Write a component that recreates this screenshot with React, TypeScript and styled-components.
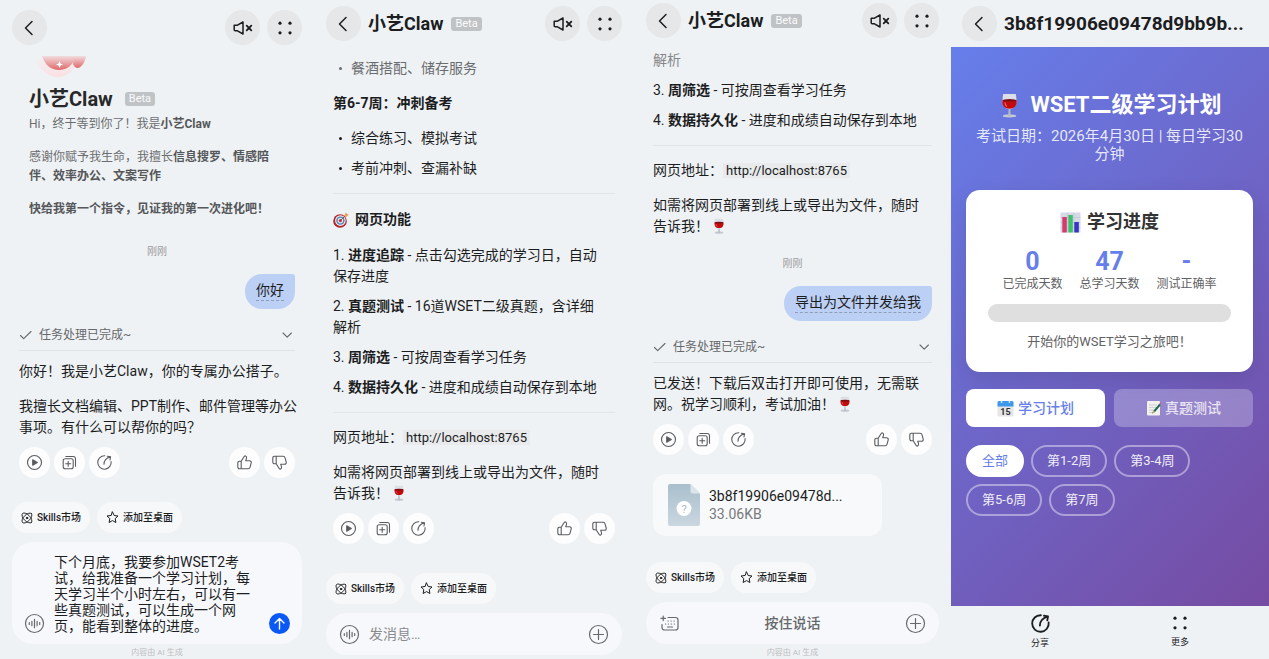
import React from "react";
import styled, { createGlobalStyle, css } from "styled-components";

const GlobalStyle = createGlobalStyle`
  * { box-sizing: border-box; }
  body {
    margin: 0;
    background: #eff2f4;
    color: #1c1d1f;
    font-family: Roboto, "Noto Sans CJK SC", sans-serif;
    font-size: 14px;
    line-height: 21px;
  }
  button, input, textarea { font: inherit; color: inherit; }
  button { border: 0; padding: 0; background: none; cursor: pointer; }
  p, h1, h2, h3, ul, ol { margin: 0; padding: 0; font-weight: 400; }
  ul, ol { list-style: none; }
  svg { display: block; flex: none; }
`;

/* ---------- page ---------- */

const Board = styled.main`
  display: grid;
  grid-template-columns: 314fr 320fr 317fr 318fr;
  min-height: 100vh;
`;

const Phone = styled.section<{ $top?: number }>`
  display: flex;
  flex-direction: column;
  min-width: 0;
  padding-top: ${(p) => p.$top ?? 0}px;
`;

const TopBar = styled.header`
  display: flex;
  align-items: center;
  gap: 7px;
  padding: 0 12px;
`;

const RoundButton = styled.button`
  display: grid;
  place-items: center;
  flex: none;
  width: 35px;
  height: 35px;
  border-radius: 50%;
  background: #e5e7e9;
`;

const BarTitle = styled.h1`
  display: flex;
  align-items: center;
  flex: 1;
  gap: 8px;
  min-width: 0;
  font-size: 18px;
  font-weight: 700;
  line-height: 24px;
`;

const Beta = styled.span`
  padding: 0 4px;
  border-radius: 3px;
  background: #c0c3c5;
  color: #fafbfc;
  font-size: 11px;
  font-weight: 400;
  line-height: 14px;
`;

const Thread = styled.div<{ $gap: number }>`
  display: flex;
  flex-direction: column;
  padding: ${(p) => p.$gap}px 19px 16px;
`;

/* ---------- messages ---------- */

const Intro = styled.div`
  display: flex;
  flex-direction: column;
  gap: 14px;
  padding-left: 10px;
  color: #6b6d70;
  font-size: 12px;
  line-height: 19px;
  white-space: nowrap;
  b { color: #55575a; }
`;

const IntroTitle = styled.h1`
  display: flex;
  align-items: center;
  gap: 12px;
  margin: -4px 0 -10px;
  color: #26282a;
  font-size: 20px;
  font-weight: 700;
  line-height: 24px;
`;

const Time = styled.time<{ $gap: number }>`
  margin-top: ${(p) => p.$gap}px;
  color: #9b9da0;
  font-size: 10px;
  line-height: 14px;
  text-align: center;
`;

const Bubble = styled.p`
  align-self: flex-end;
  margin-top: 15px;
  padding: 7px 11px 8px;
  border-radius: 17px 3px 17px 17px;
  background: #bcd0f6;
  line-height: 19px;
  span {
    display: block;
    border-bottom: 1px dashed #8d9dbb;
  }
`;

const Task = styled.button`
  display: flex;
  align-items: center;
  gap: 7px;
  margin: 16px 0 10px;
  padding-bottom: 5px;
  border-bottom: 1px solid #e1e4e6;
  color: #66686b;
  font-size: 12px;
  line-height: 20px;
  text-align: left;
  span { flex: 1; }
`;

const Text = styled.p<{ $gap?: number }>`
  margin-top: ${(p) => p.$gap ?? 0}px;
  white-space: nowrap;
`;

const Rule = styled.hr`
  width: 100%;
  height: 1px;
  margin: 14px 0;
  border: 0;
  background: #e3e6e8;
`;

const SubHead = styled.h2`
  display: flex;
  align-items: center;
  gap: 6px;
  margin: 14px 0;
  font-size: 14px;
  font-weight: 700;
  ${Rule} + & { margin: 1px 0 15px; }
`;

const Bullets = styled.ul<{ $faded?: boolean }>`
  display: grid;
  gap: 9px;
  color: ${(p) => (p.$faded ? "#6a6c6f" : "inherit")};
  li {
    display: flex;
    align-items: center;
    gap: 9px;
    padding-left: 6px;
  }
  li::before {
    content: "";
    width: 3px;
    height: 3px;
    border-radius: 50%;
    background: currentColor;
  }
`;

const Steps = styled.ol`
  display: grid;
  gap: 9px;
  white-space: nowrap;
`;

const Faded = styled.span`
  color: #85878a;
`;

const Address = styled.code`
  padding: 0 3px;
  background: #e8eaec;
  font-family: inherit;
  font-size: 13px;
`;

const Inline = styled.span`
  display: inline-block;
  margin-left: 2px;
  vertical-align: -3px;
`;

const Actions = styled.div`
  display: flex;
  gap: 4px;
  margin-top: 9px;
  button {
    display: grid;
    place-items: center;
    width: 31px;
    height: 31px;
    border-radius: 50%;
    background: #fdfdfe;
    color: #5a5c5f;
  }
  button:nth-child(4) { margin-left: auto; }
`;

const FileCard = styled.button`
  display: flex;
  align-items: center;
  gap: 9px;
  align-self: flex-start;
  width: 229px;
  height: 62px;
  margin-top: 19px;
  padding: 0 15px;
  border-radius: 13px;
  background: #f8f9fb;
  text-align: left;
  line-height: 18px;
`;

const FileText = styled.span`
  display: grid;
  small {
    color: #77797c;
    font-size: 14px;
  }
`;

/* ---------- composer ---------- */

const Dock = styled.footer<{ $end?: number }>`
  display: flex;
  flex-direction: column;
  margin-top: auto;
  padding: 0 12px ${(p) => p.$end ?? 0}px;
`;

const Chips = styled.div`
  display: flex;
  gap: 7px;
  margin-bottom: 9px;
`;

const Chip = styled.button`
  display: flex;
  align-items: center;
  gap: 4px;
  height: 31px;
  padding: 0 9px;
  border-radius: 16px;
  background: #f7f8fa;
  font-size: 10px;
  font-weight: 500;
`;

const Composer = styled.div<{ $tall?: boolean }>`
  display: flex;
  align-items: center;
  gap: 9px;
  min-height: 42px;
  padding: 0 13px;
  border-radius: 21px;
  background: #f7f8fb;
  color: #66686b;
  ${(p) =>
    p.$tall &&
    css`
      align-items: flex-end;
      padding: 12px 12px 10px;
    `}
`;

const Draft = styled.textarea`
  width: 198px;
  height: 80px;
  margin-right: auto;
  padding: 0;
  border: 0;
  outline: 0;
  resize: none;
  overflow: hidden;
  background: none;
  color: #1c1d1f;
  line-height: 16px;
`;

const Field = styled.input`
  flex: 1;
  min-width: 0;
  padding: 0;
  border: 0;
  outline: 0;
  background: none;
  &::placeholder { color: #8a8c90; opacity: 1; }
`;

const Send = styled.button`
  display: grid;
  place-items: center;
  width: 21px;
  height: 21px;
  border-radius: 50%;
  background: #0a59f7;
  color: #fff;
`;

const TalkButton = styled.button`
  flex: 1;
  font-weight: 500;
`;

const Note = styled.small`
  height: 15px;
  padding-top: 3px;
  color: #bcbec1;
  font-size: 8px;
  line-height: 12px;
  text-align: center;
`;

/* ---------- study plan page ---------- */

const FileBar = styled(TopBar)`
  height: 47px;
  padding: 0 11px;
`;

const FileTitle = styled.h1`
  overflow: hidden;
  font-size: 19px;
  font-weight: 700;
  line-height: 24px;
  white-space: nowrap;
`;

const Plan = styled.div`
  flex: 1;
  padding: 45px 16px 15px 15px;
  background: linear-gradient(135deg, #667eea 0%, #764ba2 100%);
  color: #fff;
`;

const PlanTitle = styled.h2`
  display: flex;
  justify-content: center;
  align-items: center;
  gap: 8px;
  font-size: 22px;
  font-weight: 700;
  line-height: 26px;
`;

const PlanSub = styled.p`
  margin-top: 9px;
  color: rgba(255, 255, 255, 0.85);
  font-size: 15px;
  line-height: 18px;
  text-align: center;
`;

const Card = styled.section`
  margin-top: 27px;
  padding: 20px 22px;
  border-radius: 14px;
  background: #fff;
  box-shadow: 0 8px 22px rgba(0, 0, 0, 0.1);
  color: #5f6164;
  text-align: center;
  h3 {
    display: flex;
    justify-content: center;
    align-items: center;
    gap: 6px;
    color: #333;
    font-size: 18px;
    font-weight: 700;
    line-height: 24px;
  }
`;

const Stats = styled.dl`
  display: flex;
  justify-content: center;
  gap: 17px;
  margin: 15px 0 11px;
  div { display: flex; flex-direction: column-reverse; }
  dt { font-size: 12px; line-height: 18px; }
  dd {
    margin: 0;
    color: #667eea;
    font-size: 25px;
    font-weight: 700;
    line-height: 26px;
  }
`;

const Track = styled.div`
  height: 18px;
  border-radius: 9px;
  background: #dfdfdf;
`;

const Cheer = styled.p`
  margin-top: 9px;
  font-size: 13px;
`;

const Tabs = styled.div`
  display: flex;
  gap: 9px;
  margin-top: 17px;
`;

const Tab = styled.button<{ $on?: boolean }>`
  display: flex;
  flex: 1;
  justify-content: center;
  align-items: center;
  gap: 4px;
  height: 38px;
  border-radius: 8px;
  background: ${(p) => (p.$on ? "#fff" : "rgba(255,255,255,0.26)")};
  color: ${(p) => (p.$on ? "#667eea" : "#e9e4f3")};
  font-weight: 500;
`;

const Weeks = styled.div`
  display: flex;
  flex-wrap: wrap;
  gap: 7px;
  margin-top: 18px;
`;

const Week = styled.button<{ $on?: boolean }>`
  height: 32px;
  padding: 0 14px;
  border: 2px solid ${(p) => (p.$on ? "#fff" : "rgba(255,255,255,0.42)")};
  border-radius: 16px;
  background: ${(p) => (p.$on ? "#fff" : "transparent")};
  color: ${(p) => (p.$on ? "#667eea" : "#f0edf7")};
  font-size: 13px;
  line-height: 18px;
`;

const FootNav = styled.nav`
  display: flex;
  height: 53px;
  padding: 0 19px;
  button {
    display: flex;
    flex: 1;
    flex-direction: column;
    align-items: center;
    gap: 2px;
    padding-top: 7px;
    font-size: 9px;
    line-height: 14px;
  }
`;

/* ---------- icons ---------- */

const stroke = {
  fill: "none",
  stroke: "currentColor",
  strokeLinecap: "round" as const,
  strokeLinejoin: "round" as const,
};

const Back = () => (
  <svg width="20" height="20" viewBox="0 0 20 20" {...stroke} strokeWidth="1.5">
    <path d="M12 3.500 5.500 10l6.500 6.500" />
  </svg>
);

const Mute = () => (
  <svg width="22" height="20" viewBox="0 0 22 20" {...stroke} strokeWidth="1.5">
    <path d="M2.200 7.200h3.300L11 4v12l-5.500-3.200H3.200a1 1 0 0 1-1-1z" />
    <path d="m14.700 7.700 4.600 4.600m0-4.600-4.600 4.600" strokeWidth="1.800" />
  </svg>
);

const Dots = () => (
  <svg width="20" height="20" viewBox="0 0 20 20" fill="currentColor">
    <circle cx="5" cy="5.200" r="1.600" />
    <circle cx="15" cy="5.200" r="1.600" />
    <circle cx="5" cy="14.800" r="1.600" />
    <circle cx="15" cy="14.800" r="1.600" />
  </svg>
);

const Check = () => (
  <svg width="13" height="12" viewBox="0 0 13 12" {...stroke} strokeWidth="1.100">
    <path d="M1.500 6.500 4.700 9.700 12 2.500" />
  </svg>
);

const Down = () => (
  <svg width="16" height="12" viewBox="0 0 16 12" {...stroke} strokeWidth="1.100">
    <path d="m4 4 4.200 4.200L12.400 4" />
  </svg>
);

const Play = () => (
  <svg width="17" height="17" viewBox="0 0 17 17" {...stroke} strokeWidth="1.100">
    <circle cx="8.500" cy="8.500" r="7" />
    <path d="M6.700 5.800v5.400l4.600-2.700z" fill="currentColor" />
  </svg>
);

const Copy = () => (
  <svg width="17" height="17" viewBox="0 0 17 17" {...stroke} strokeWidth="1.100">
    <rect x="2.200" y="4.700" width="10" height="10" rx="2" />
    <path d="M4.800 2.500h7.500a2.200 2.200 0 0 1 2.200 2.200v7.500M7.200 7.200v5M4.700 9.700h5" />
  </svg>
);

const Share = ({ size = 17, weight = 1.1 }: { size?: number; weight?: number }) => (
  <svg width={size} height={size} viewBox="0 0 17 17" {...stroke} strokeWidth={weight}>
    <path d="M8.800 1.800A6.700 6.700 0 1 0 15.100 7.600" />
    <path d="M8 10.200C8 7 10 4.200 14.300 2.800M11.300 2.200l3.300.5-.6 3.300" />
  </svg>
);

const thumb =
  "M5.200 7.300 8 2.700c.3-.7 1-1 1.600-.7.9.4 1.200 1.400.9 2.300l-.8 2.400h3.800c1.300 0 2 1.100 1.700 2.200l-1.200 4.400c-.2.900-.9 1.400-1.800 1.400H5.200zM5.200 14.700H3.400c-.9 0-1.600-.7-1.600-1.600V8.900c0-.9.7-1.600 1.600-1.600h1.800";

const Up = () => (
  <svg width="17" height="17" viewBox="0 0 17 17" {...stroke} strokeWidth="1.100">
    <path d={thumb} />
  </svg>
);

const Dislike = () => (
  <svg width="17" height="17" viewBox="0 0 17 17" {...stroke} strokeWidth="1.100">
    <path d={thumb} transform="matrix(1 0 0 -1 0 17)" />
  </svg>
);

const Skills = () => (
  <svg width="12" height="12" viewBox="0 0 12 12" {...stroke} strokeWidth=".9">
    <ellipse cx="6" cy="6" rx="6.300" ry="3.200" transform="rotate(45 6 6)" />
    <ellipse cx="6" cy="6" rx="6.300" ry="3.200" transform="rotate(-45 6 6)" />
    <circle cx="6" cy="6" r=".8" fill="currentColor" />
  </svg>
);

const Star = () => (
  <svg width="13" height="13" viewBox="0 0 13 13" {...stroke} strokeWidth="1">
    <path d="m6.500 1 1.700 3.500 3.800.5-2.800 2.600.7 3.900-3.400-1.900-3.400 1.900.7-3.900L1 5l3.800-.5z" />
  </svg>
);

const Voice = () => (
  <svg width="21" height="21" viewBox="0 0 21 21" {...stroke} strokeWidth="1.200">
    <circle cx="10.500" cy="10.500" r="9" />
    <path d="M5.300 9.500v2M7.900 8.300v4.400M10.500 6.300v8.400M13.100 8.300v4.400M15.700 9.500v2" />
  </svg>
);

const Plus = () => (
  <svg width="21" height="21" viewBox="0 0 21 21" {...stroke} strokeWidth="1.200">
    <circle cx="10.500" cy="10.500" r="9" />
    <path d="M10.500 5.500v10M5.500 10.500h10" />
  </svg>
);

const Keyboard = () => (
  <svg width="21" height="21" viewBox="0 0 21 21" {...stroke} strokeWidth="1.200">
    <path d="M9 4.500h7.500a2.500 2.500 0 0 1 2.500 2.500v7.500a2.500 2.500 0 0 1-2.500 2.500h-11A2.500 2.500 0 0 1 3 14.500V11.500M4.200 3v4.600M1.900 5.300h4.600" />
    <path d="M9 8h.2M12 8h.2M15 8h.2M6.500 11h.2M9.300 11h.2M12.200 11h.2M15.200 11h.2M8.500 14h5" />
  </svg>
);

const ArrowUp = () => (
  <svg width="15" height="15" viewBox="0 0 15 15" {...stroke} strokeWidth="1.400">
    <path d="M7.500 13V2.500M3 7l4.500-4.500L12 7" />
  </svg>
);

const Mascot = () => (
  <svg width="64" height="21" viewBox="0 0 64 21">
    <defs>
      <linearGradient id="claw" x1="0" y1="0" x2="0" y2="1">
        <stop offset="0" stopColor="#f1dcde" />
        <stop offset="1" stopColor="#e0696c" />
      </linearGradient>
      <linearGradient id="halo" x1="0" y1="0" x2="0" y2="1">
        <stop offset="0" stopColor="#fbe3e5" stopOpacity="0" />
        <stop offset="1" stopColor="#fbdfe1" />
      </linearGradient>
    </defs>
    <path d="M5 0h46c-4 13-12 21-22 21S9 13 5 0z" fill="url(#halo)" />
    <path d="M13 0h34c-3 9-9 14-17 14S16 9 13 0z" fill="url(#claw)" />
    <path d="M45 0h12c-1 6-4 11-8 12-3 0-4-2-5-4z" fill="url(#claw)" />
    <path d="m30.500 5 1 2.500 2.500 1-2.500 1-1 2.500-1-2.500-2.500-1 2.500-1z" fill="#fff" />
  </svg>
);

const Wine = ({ size = 16 }: { size?: number }) => (
  <svg width={size} height={size} viewBox="0 0 24 24">
    <ellipse cx="12" cy="22" rx="6.500" ry="1.600" fill="#c4c9d2" />
    <path d="M11.200 14h1.600l.4 8h-2.400z" fill="#b3b9c4" />
    <path d="M6 1h12c1.600 7 .5 14.500-6 14.500S4.400 8 6 1z" fill="#dcdfe6" />
    <path d="M5.200 7h13.600c.2 4.500-1.300 8-6.800 8s-7-3.500-6.800-8z" fill="#c20a0d" />
    <ellipse cx="12" cy="7" rx="6.700" ry="1.200" fill="#7c0d12" />
    <path d="M7.500 9c.2 2 .8 3 2 4" stroke="#f06a66" strokeWidth="1" fill="none" />
  </svg>
);

const Target = () => (
  <svg width="16" height="16" viewBox="0 0 16 16">
    <circle cx="7" cy="9" r="6.800" fill="#b3232b" />
    <circle cx="7.400" cy="8.600" r="5.300" fill="#f0eef0" />
    <circle cx="7.400" cy="8.600" r="4.200" fill="#4a7fb5" />
    <circle cx="7.400" cy="8.600" r="2.800" fill="#e8e6ea" />
    <circle cx="7.400" cy="8.600" r="1.600" fill="#d0323a" />
    <path d="M7.500 8.500 12 4" stroke="#7a5a4a" strokeWidth="1" />
    <path d="m11 3.500 2-3 1 1.500 1.800.8L13 5.200z" fill="#e8a25a" />
  </svg>
);

const Chart = () => (
  <svg width="21" height="21" viewBox="0 0 21 21">
    <rect x=".5" y=".5" width="20" height="20" fill="#d5dae6" />
    <path d="M.5 5.500h20M.5 10.500h20M.5 15.500h20M7.500.5v20M14 .5v20" stroke="#bcc3d4" strokeWidth=".6" />
    <rect x="2.300" y="5" width="4.500" height="15.500" fill="#d33b6b" />
    <rect x="8.300" y="3" width="4.500" height="17.500" fill="#3fbf6c" />
    <rect x="14.300" y="10" width="4.500" height="10.500" fill="#3636c0" />
  </svg>
);

const CalendarDay = () => (
  <svg width="17" height="17" viewBox="0 0 17 17">
    <rect x=".5" y="1" width="16" height="15.500" rx="1.500" fill="#e6e6e8" />
    <path d="M.5 6.500V2.500A1.500 1.500 0 0 1 2 1h13a1.500 1.500 0 0 1 1.500 1.500v4z" fill="#3d97ea" />
    <circle cx="4.500" cy="2" r="1" fill="#cfe4f8" />
    <circle cx="12.500" cy="2" r="1" fill="#cfe4f8" />
    <text x="8.500" y="14.500" fontSize="9" fontWeight="700" textAnchor="middle" fill="#333">15</text>
  </svg>
);

const Memo = () => (
  <svg width="15" height="16" viewBox="0 0 15 16">
    <rect x="1" y="1" width="13" height="14.500" rx="1" fill="#f2f1ee" />
    <path d="M3 5h8M3 7.500h8M3 10h5M3 12.500h4" stroke="#c7c6c9" strokeWidth=".8" />
    <path d="m13.500 3.500-6 7-1.700 3.200L9 12l5.500-6.500z" fill="#1d6b57" />
    <path d="m7.500 10.500-1.700 3.200L9 12z" fill="#e0b070" />
    <path d="m13.500 3.500 1-1 .5 2.500z" fill="#c8506a" />
  </svg>
);

const UnknownFile = () => (
  <svg width="32" height="42" viewBox="0 0 32 42">
    <defs>
      <linearGradient id="doc" x1="0" y1="0" x2="0" y2="1">
        <stop offset="0" stopColor="#a9bfcd" />
        <stop offset="1" stopColor="#cad7e0" />
      </linearGradient>
    </defs>
    <path d="M2 0h20.500L32 9.500V40a2 2 0 0 1-2 2H2a2 2 0 0 1-2-2V2a2 2 0 0 1 2-2z" fill="url(#doc)" />
    <path d="M22.500 0 32 9.500h-7.500a2 2 0 0 1-2-2z" fill="#dbe5eb" />
    <circle cx="16" cy="24.500" r="7.500" fill="#fff" />
    <text x="16" y="28.500" fontSize="11" textAnchor="middle" fill="#a9bac6">?</text>
  </svg>
);

/* ---------- shared parts ---------- */

const ChatBar = ({ titled }: { titled?: boolean }) => (
  <TopBar>
    <RoundButton aria-label="返回"><Back /></RoundButton>
    <BarTitle as={titled ? "h1" : "div"}>
      {titled && (<>小艺Claw <Beta>Beta</Beta></>)}
    </BarTitle>
    <RoundButton aria-label="静音"><Mute /></RoundButton>
    <RoundButton aria-label="更多选项"><Dots /></RoundButton>
  </TopBar>
);

const MessageActions = () => (
  <Actions>
    <button aria-label="播放"><Play /></button>
    <button aria-label="复制"><Copy /></button>
    <button aria-label="分享"><Share /></button>
    <button aria-label="赞"><Up /></button>
    <button aria-label="踩"><Dislike /></button>
  </Actions>
);

const Shortcuts = () => (
  <Chips>
    <Chip><Skills />Skills市场</Chip>
    <Chip><Star />添加至桌面</Chip>
  </Chips>
);

const TaskDone = () => (
  <Task>
    <Check />
    <span>任务处理已完成~</span>
    <Down />
  </Task>
);

const Deploy = () => (
  <>
    <Text>网页地址：<Address>http://localhost:8765</Address></Text>
    <Text $gap={14}>
      如需将网页部署到线上或导出为文件，随时<br />告诉我！<Inline><Wine /></Inline>
    </Text>
  </>
);

const WeekFilterStep = () => <li>3. <b>周筛选</b> - 可按周查看学习任务</li>;
const StorageStep = () => <li>4. <b>数据持久化</b> - 进度和成绩自动保存到本地</li>;

const draft =
  "下个月底，我要参加WSET2考试，给我准备一个学习计划，每天学习半个小时左右，可以有一些真题测试，可以生成一个网页，能看到整体的进度。";

const stats = [
  ["已完成天数", "0"],
  ["总学习天数", "47"],
  ["测试正确率", "-"],
];

const weeks = ["全部", "第1-2周", "第3-4周", "第5-6周", "第7周"];

/* ---------- screens ---------- */

const WelcomeScreen = () => (
  <Phone $top={10}>
    <ChatBar />
    <Thread $gap={11}>
      <Intro>
        <Mascot />
        <IntroTitle>小艺Claw <Beta>Beta</Beta></IntroTitle>
        <p>Hi，终于等到你了！我是<b>小艺Claw</b></p>
        <p>感谢你赋予我生命，我擅长<b>信息搜罗、情感陪<br />伴、效率办公、文案写作</b></p>
        <p><b>快给我第一个指令，见证我的第一次进化吧！</b></p>
      </Intro>
      <Time $gap={26}>刚刚</Time>
      <Bubble><span>你好</span></Bubble>
      <TaskDone />
      <Text>你好！我是小艺Claw，你的专属办公搭子。</Text>
      <Text $gap={14}>
        我擅长文档编辑、PPT制作、邮件管理等办公<br />事项。有什么可以帮你的吗？
      </Text>
      <MessageActions />
    </Thread>
    <Dock>
      <Shortcuts />
      <Composer $tall>
        <Voice />
        <Draft aria-label="消息" defaultValue={draft} />
        <Send aria-label="发送"><ArrowUp /></Send>
      </Composer>
      <Note>内容由 AI 生成</Note>
    </Dock>
  </Phone>
);

const FeaturesScreen = () => (
  <Phone $top={6}>
    <ChatBar titled />
    <Thread $gap={17}>
      <Bullets $faded><li>餐酒搭配、储存服务</li></Bullets>
      <SubHead>第6-7周：冲刺备考</SubHead>
      <Bullets>
        <li>综合练习、模拟考试</li>
        <li>考前冲刺、查漏补缺</li>
      </Bullets>
      <Rule />
      <SubHead><Target />网页功能</SubHead>
      <Steps>
        <li>1. <b>进度追踪</b> - 点击勾选完成的学习日，自动<br />保存进度</li>
        <li>2. <b>真题测试</b> - 16道WSET二级真题，含详细<br />解析</li>
        <WeekFilterStep />
        <StorageStep />
      </Steps>
      <Rule />
      <Deploy />
      <MessageActions />
    </Thread>
    <Dock $end={4}>
      <Shortcuts />
      <Composer>
        <Voice />
        <Field aria-label="消息" placeholder="发消息…" />
        <Plus />
      </Composer>
    </Dock>
  </Phone>
);

const ExportScreen = () => (
  <Phone $top={3}>
    <ChatBar titled />
    <Thread $gap={12}>
      <Steps>
        <li><Faded>解析</Faded></li>
        <WeekFilterStep />
        <StorageStep />
      </Steps>
      <Rule />
      <Deploy />
      <Time $gap={20}>刚刚</Time>
      <Bubble><span>导出为文件并发给我</span></Bubble>
      <TaskDone />
      <Text>
        已发送！下载后双击打开即可使用，无需联<br />网。祝学习顺利，考试加油！<Inline><Wine /></Inline>
      </Text>
      <MessageActions />
      <FileCard>
        <UnknownFile />
        <FileText>3b8f19906e09478d...<small>33.06KB</small></FileText>
      </FileCard>
    </Thread>
    <Dock>
      <Shortcuts />
      <Composer>
        <Keyboard />
        <TalkButton>按住说话</TalkButton>
        <Plus />
      </Composer>
      <Note>内容由 AI 生成</Note>
    </Dock>
  </Phone>
);

const PlanScreen = () => (
  <Phone>
    <FileBar>
      <RoundButton aria-label="返回"><Back /></RoundButton>
      <FileTitle>3b8f19906e09478d9bb9b...</FileTitle>
    </FileBar>
    <Plan>
      <PlanTitle><Wine size={25} />WSET二级学习计划</PlanTitle>
      <PlanSub>考试日期：2026年4月30日 | 每日学习30<br />分钟</PlanSub>
      <Card>
        <h3><Chart />学习进度</h3>
        <Stats>
          {stats.map(([label, value]) => (
            <div key={label}><dt>{label}</dt><dd>{value}</dd></div>
          ))}
        </Stats>
        <Track role="progressbar" aria-label="学习进度" aria-valuenow={0} />
        <Cheer>开始你的WSET学习之旅吧！</Cheer>
      </Card>
      <Tabs>
        <Tab $on><CalendarDay />学习计划</Tab>
        <Tab><Memo />真题测试</Tab>
      </Tabs>
      <Weeks>
        {weeks.map((week, i) => <Week key={week} $on={i === 0}>{week}</Week>)}
      </Weeks>
    </Plan>
    <FootNav>
      <button><Share size={21} weight={1.5} />分享</button>
      <button><Dots />更多</button>
    </FootNav>
  </Phone>
);

export default function App() {
  return (
    <>
      <GlobalStyle />
      <Board>
        <WelcomeScreen />
        <FeaturesScreen />
        <ExportScreen />
        <PlanScreen />
      </Board>
    </>
  );
}
